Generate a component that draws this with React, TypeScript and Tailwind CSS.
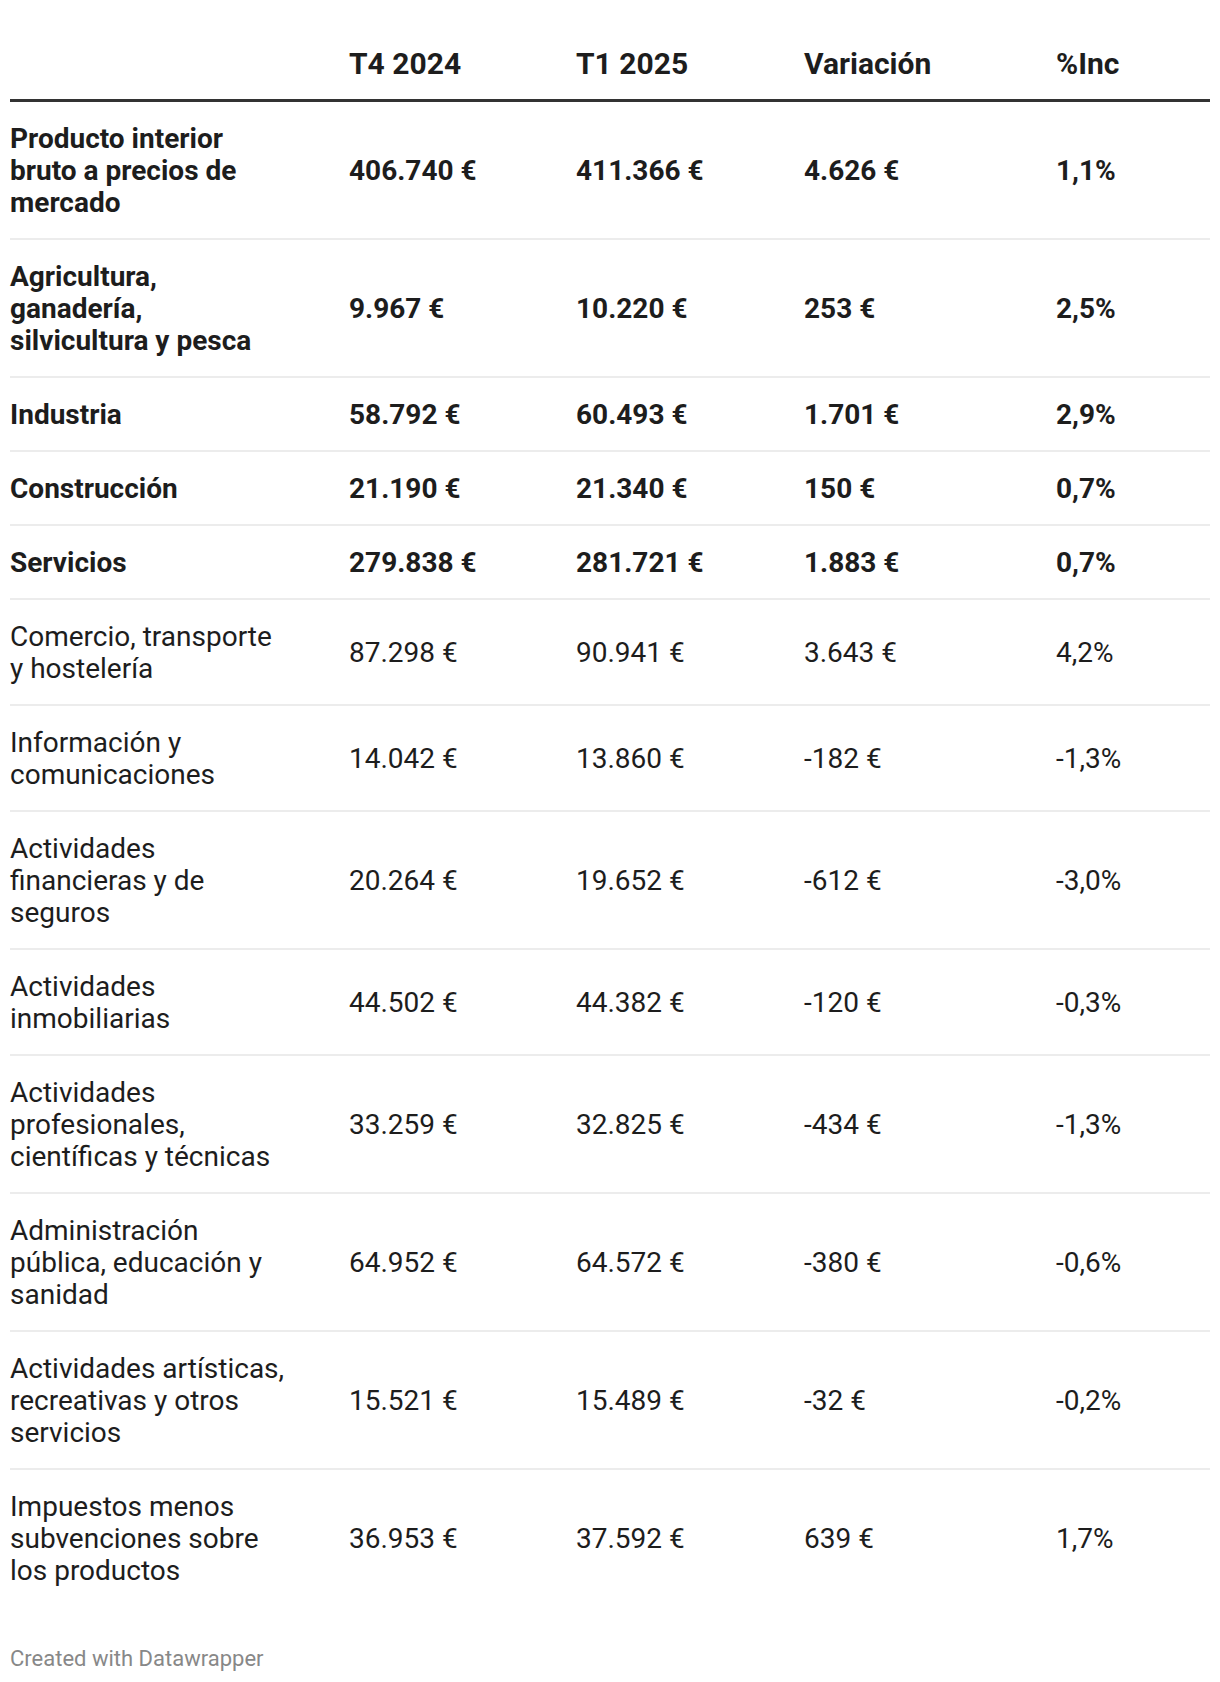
import React from 'react'

interface Row {
  label: string[]
  t4: string
  t1: string
  diff: string
  pct: string
  bold?: boolean
}

const rows: Row[] = [
  { label: ['Producto interior', 'bruto a precios de', 'mercado'], t4: '406.740 €', t1: '411.366 €', diff: '4.626 €', pct: '1,1%', bold: true },
  { label: ['Agricultura,', 'ganadería,', 'silvicultura y pesca'], t4: '9.967 €', t1: '10.220 €', diff: '253 €', pct: '2,5%', bold: true },
  { label: ['Industria'], t4: '58.792 €', t1: '60.493 €', diff: '1.701 €', pct: '2,9%', bold: true },
  { label: ['Construcción'], t4: '21.190 €', t1: '21.340 €', diff: '150 €', pct: '0,7%', bold: true },
  { label: ['Servicios'], t4: '279.838 €', t1: '281.721 €', diff: '1.883 €', pct: '0,7%', bold: true },
  { label: ['Comercio, transporte', 'y hostelería'], t4: '87.298 €', t1: '90.941 €', diff: '3.643 €', pct: '4,2%' },
  { label: ['Información y', 'comunicaciones'], t4: '14.042 €', t1: '13.860 €', diff: '-182 €', pct: '-1,3%' },
  { label: ['Actividades', 'financieras y de', 'seguros'], t4: '20.264 €', t1: '19.652 €', diff: '-612 €', pct: '-3,0%' },
  { label: ['Actividades', 'inmobiliarias'], t4: '44.502 €', t1: '44.382 €', diff: '-120 €', pct: '-0,3%' },
  { label: ['Actividades', 'profesionales,', 'científicas y técnicas'], t4: '33.259 €', t1: '32.825 €', diff: '-434 €', pct: '-1,3%' },
  { label: ['Administración', 'pública, educación y', 'sanidad'], t4: '64.952 €', t1: '64.572 €', diff: '-380 €', pct: '-0,6%' },
  { label: ['Actividades artísticas,', 'recreativas y otros', 'servicios'], t4: '15.521 €', t1: '15.489 €', diff: '-32 €', pct: '-0,2%' },
  { label: ['Impuestos menos', 'subvenciones sobre', 'los productos'], t4: '36.953 €', t1: '37.592 €', diff: '639 €', pct: '1,7%' },
]

const cols = 'grid grid-cols-[339px_227px_228px_252px_1fr] items-center'

export default function App() {
  return (
    <div className="w-[1220px] min-h-[1682px] bg-white px-[10px] text-[#1d1d1d] font-['Roboto',sans-serif]">
      {/* header */}
      <div className={`${cols} pt-[48px] pb-[19px] border-b-[3px] border-[#333333] text-[30px] leading-[32px] font-bold`}>
        <div />
        <div>T4 2024</div>
        <div>T1 2025</div>
        <div>Variación</div>
        <div>%Inc</div>
      </div>

      {rows.map((row, i) => (
        <div
          key={i}
          className={`${cols} pt-[21px] pb-[19px] text-[28px] leading-[32px] whitespace-nowrap ${row.bold ? 'font-bold' : 'font-normal'} ${
            i < rows.length - 1 ? 'border-b-2 border-[#ececec]' : ''
          }`}
        >
          <div>
            {row.label.map((line, j) => (
              <div key={j}>{line}</div>
            ))}
          </div>
          <div>{row.t4}</div>
          <div>{row.t1}</div>
          <div>{row.diff}</div>
          <div>{row.pct}</div>
        </div>
      ))}

      <div className="pt-[39px] text-[22px] leading-[28px] text-[#888888]">Created with Datawrapper</div>
    </div>
  )
}
